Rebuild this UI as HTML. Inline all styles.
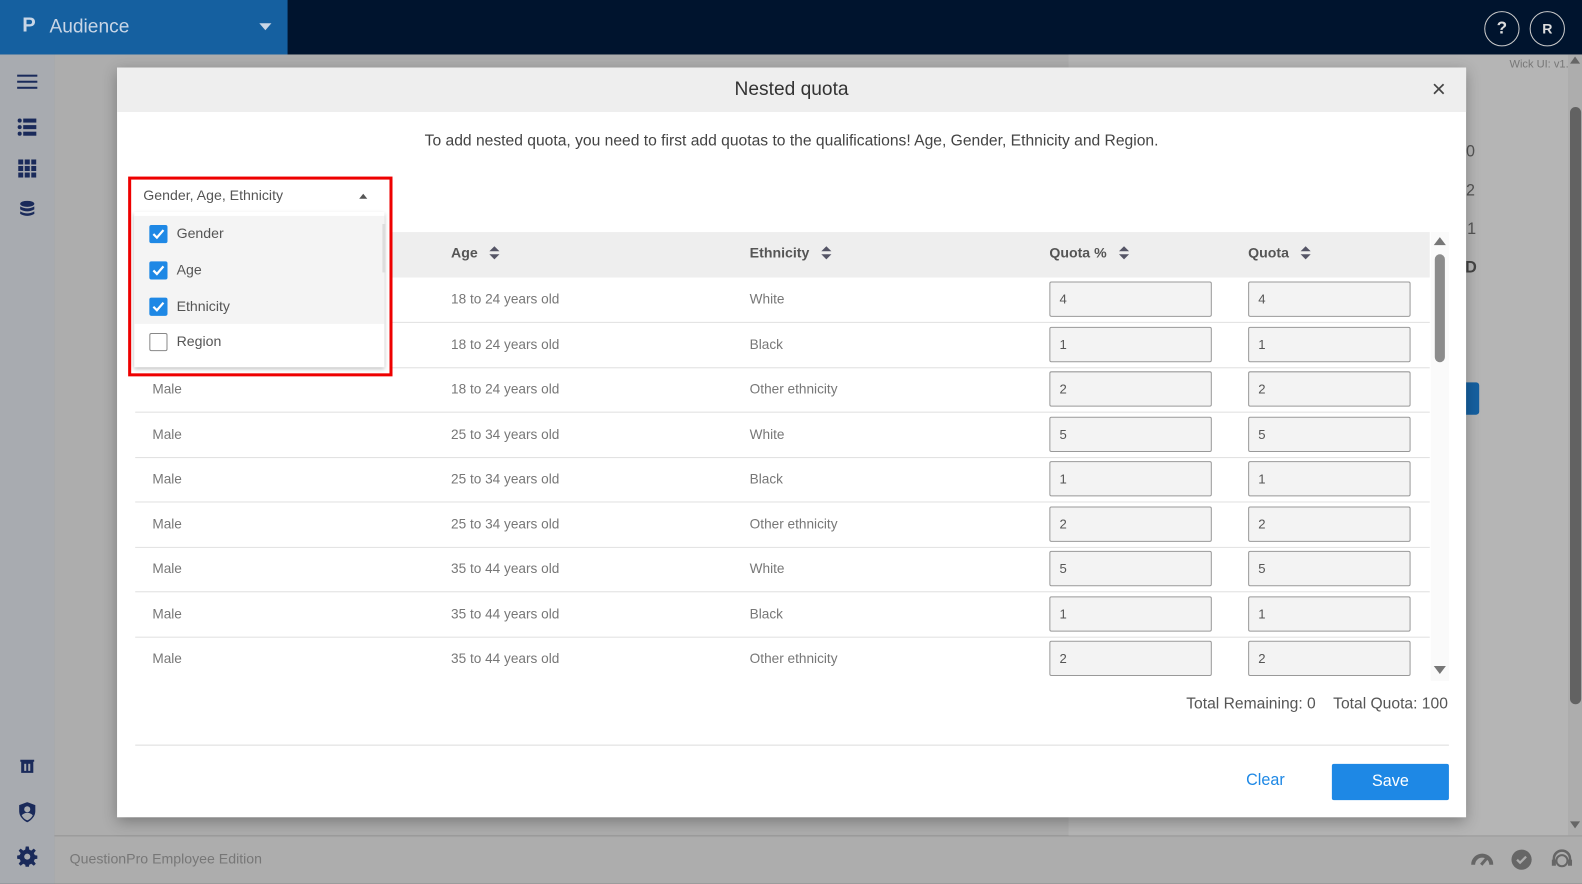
<!DOCTYPE html>
<html><head><style>
*{box-sizing:border-box;margin:0;padding:0}
body{width:1582px;height:884px;overflow:hidden;background:#222;font-family:"Liberation Sans",sans-serif;position:relative}
#w{position:absolute;left:0;top:0;width:1568px;height:876px;transform:scale(1.009);transform-origin:0 0}
.abs{position:absolute}
.top{left:0;top:0;width:1568px;height:54px;background:#00142e}
.brand{left:0;top:0;width:285px;height:54px;background:#1560a0;color:#c9d6e6;font-size:19px}
.side{left:0;top:54px;width:54px;height:822px;background:#a8abb0}
.main{left:54px;top:54px;width:1514px;height:774px;background:#adadad}
.foot{left:54px;top:828px;width:1514px;height:48px;background:#adadad;border-top:1px solid #999}
.modal{left:116px;top:67px;width:1337px;height:743px;background:#fff;box-shadow:0 4px 14px rgba(0,0,0,.3)}
.mh{left:0;top:0;width:1337px;height:44px;background:#eee;text-align:center;font-size:19px;line-height:44px;color:#333}
.cell{position:absolute;font-size:13.5px;color:#777}
.row{position:absolute;left:18px;width:1283px;height:45px;border-bottom:1px solid #e0e0e0}
.inp{position:absolute;width:161px;height:35px;border:1px solid #999;background:#f3f3f3;border-radius:2px;font-size:13px;color:#555;padding:9px 0 0 9px}
.th{position:absolute;top:12px;font-size:14px;font-weight:bold;color:#555}
.sort{display:inline-block;vertical-align:middle;margin-left:12px;width:10px;height:14px;position:relative}
.sort:before{content:"";position:absolute;left:0;top:0;border:5px solid transparent;border-bottom:5px solid #556;border-top:0}
.sort:after{content:"";position:absolute;left:0;top:8px;border:5px solid transparent;border-top:5px solid #556;border-bottom:0}
.cb{position:absolute;left:15px;width:18px;height:18px;border-radius:2px;background:#1e88e5}
.cb svg{position:absolute;left:2px;top:3px}
.opt{position:absolute;left:0;width:250px;height:36px;font-size:14px;color:#555}
.opt span{position:absolute;left:42px;top:9px}
</style></head><body><div id="w">
<div class="abs top"></div>
<div class="abs brand"><span class="abs" style="left:22px;top:14px;font-weight:bold;font-size:20px;color:#c9d6e6">P</span><span class="abs" style="left:49px;top:16px">Audience</span>
<span class="abs" style="left:257px;top:23px;border:6px solid transparent;border-top:7px solid #c9d6e6"></span></div>
<div class="abs" style="left:1471px;top:11px;width:35px;height:35px;border:1.5px solid #ccc;border-radius:50%;color:#ddd;font-weight:bold;text-align:center;line-height:32px;font-size:17px">?</div>
<div class="abs" style="left:1516px;top:11px;width:35px;height:35px;border:1.5px solid #ccc;border-radius:50%;color:#ddd;font-weight:bold;text-align:center;line-height:32px;font-size:14px">R</div>
<div class="abs side">
<div class="abs" style="left:17px;top:20px;width:20px;height:2px;background:#1a2a5a;box-shadow:0 6px 0 #1a2a5a,0 12px 0 #1a2a5a"></div>
<svg class="abs" style="left:17px;top:63px" width="20" height="18"><g fill="#1a2a5a"><circle cx="2.5" cy="2.5" r="2"/><circle cx="2.5" cy="9" r="2"/><circle cx="2.5" cy="15.5" r="2"/><rect x="6" y="0.5" width="13" height="4"/><rect x="6" y="7" width="13" height="4"/><rect x="6" y="13.5" width="13" height="4"/></g></svg>
<svg class="abs" style="left:18px;top:104px" width="18" height="18"><g fill="#1a2a5a"><rect x="0" y="0" width="5" height="5"/><rect x="6.5" y="0" width="5" height="5"/><rect x="13" y="0" width="5" height="5"/><rect x="0" y="6.5" width="5" height="5"/><rect x="6.5" y="6.5" width="5" height="5"/><rect x="13" y="6.5" width="5" height="5"/><rect x="0" y="13" width="5" height="5"/><rect x="6.5" y="13" width="5" height="5"/><rect x="13" y="13" width="5" height="5"/></g></svg>
<svg class="abs" style="left:19px;top:145px" width="16" height="16"><g fill="#1a2a5a"><ellipse cx="8" cy="3" rx="7" ry="3"/><path d="M1 5.5q7 4 14 0v3q-7 4-14 0z"/><path d="M1 10.5q7 4 14 0v2.5q-7 4-14 0z"/></g></svg>
<svg class="abs" style="left:20px;top:698px" width="14" height="15"><path d="M0 1h14v2h-1v11H1V3H0z" fill="#1a2a5a"/><rect x="4" y="5" width="2" height="7" fill="#a8abb0"/><rect x="8" y="5" width="2" height="7" fill="#a8abb0"/></svg>
<svg class="abs" style="left:18px;top:741px" width="18" height="20"><path d="M9 0l8 3v6c0 5-4 9-8 11C5 18 1 14 1 9V3z" fill="#1a2a5a"/><circle cx="9" cy="7" r="3" fill="#a8abb0"/><path d="M3.5 13q5.5-5 11 0q-2 4-5.5 5q-3.5-1-5.5-5z" fill="#a8abb0"/></svg>
<svg class="abs" style="left:17px;top:785px" width="20" height="20" viewBox="0 0 20 20"><path d="M8.5 0h3l.5 3 2 1 2.5-2 2 2-2 2.5 1 2 3 .5v3l-3 .5-1 2 2 2.5-2 2-2.5-2-2 1-.5 3h-3l-.5-3-2-1-2.5 2-2-2 2-2.5-1-2-3-.5v-3l3-.5 1-2-2-2.5 2-2 2.5 2 2-1z" fill="#1a2a5a"/><circle cx="10" cy="10" r="3" fill="#a8abb0"/></svg>
</div>
<div class="abs main">
<div class="abs" style="left:1005px;top:0;width:497px;height:774px;background:#b5b5b5"></div>
<div class="abs" style="left:1442px;top:4px;font-size:11px;color:#777">Wick UI: v1.1</div>
<div class="abs" style="left:1390px;top:88px;font-size:16px;color:#555">00</div>
<div class="abs" style="left:1390px;top:127px;font-size:16px;color:#555">32</div>
<div class="abs" style="left:1400px;top:165px;font-size:16px;color:#555">1</div>
<div class="abs" style="left:1398px;top:203px;font-size:16px;color:#444;font-weight:bold">D</div>
<div class="abs" style="left:1398px;top:325px;width:14px;height:32px;background:#1560a0;border-radius:0 3px 3px 0"></div>
<div class="abs" style="left:1500px;top:0;width:14px;height:774px;background:#adadad"></div>
<div class="abs" style="left:1502px;top:2px;border:5px solid transparent;border-bottom:7px solid #666;border-top:0"></div>
<div class="abs" style="left:1502px;top:52px;width:11px;height:592px;background:#626262;border-radius:6px"></div>
<div class="abs" style="left:1502px;top:760px;border:5px solid transparent;border-top:7px solid #666;border-bottom:0"></div>
</div>
<div class="abs foot"><span class="abs" style="left:15px;top:14px;font-size:14px;color:#777">QuestionPro Employee Edition</span>
<svg class="abs" style="left:1404px;top:14px" width="22" height="16"><path d="M2 14A9 9 0 0 1 20 14" stroke="#666" stroke-width="4" fill="none"/><path d="M10 14l6-7" stroke="#666" stroke-width="3"/></svg>
<svg class="abs" style="left:1443px;top:12px" width="22" height="22"><circle cx="11" cy="11" r="10" fill="#666"/><path d="M6.5 11l3 3 6-6" stroke="#adadad" stroke-width="2.2" fill="none"/></svg>
<svg class="abs" style="left:1483px;top:12px" width="22" height="22"><path d="M3 13V10a8 8 0 0 1 16 0v3" stroke="#666" stroke-width="2.5" fill="none"/><circle cx="11" cy="12" r="5.5" stroke="#666" stroke-width="2" fill="none"/><rect x="1" y="11" width="4" height="6" fill="#666"/><rect x="17" y="11" width="4" height="6" fill="#666"/></svg>
</div>
<div class="abs modal">
<div class="abs mh">Nested quota<span class="abs" style="right:20px;top:0;font-size:24px;color:#444">×</span></div>
<div class="abs" style="left:0;top:64px;width:1337px;text-align:center;font-size:15.5px;color:#444">To add nested quota, you need to first add quotas to the qualifications! Age, Gender, Ethnicity and Region.</div>
<div class="abs" style="left:18px;top:163px;width:1283px;height:45px;background:#eee">
<div class="th" style="left:313px">Age<span class="sort"></span></div>
<div class="th" style="left:609px">Ethnicity<span class="sort"></span></div>
<div class="th" style="left:906px">Quota %<span class="sort"></span></div>
<div class="th" style="left:1103px">Quota<span class="sort"></span></div>
</div>
<div class="abs" style="left:1302px;top:163px;width:18px;height:445px;background:#fafafa">
<div class="abs" style="left:3px;top:5px;border:6px solid transparent;border-bottom:8px solid #777;border-top:0"></div>
<div class="abs" style="left:4px;top:22px;width:10px;height:107px;background:#8c8c8c;border-radius:5px"></div>
<div class="abs" style="left:3px;top:430px;border:6px solid transparent;border-top:8px solid #777;border-bottom:0"></div>
</div>
<div class="row" style="top:208px"><span class="cell" style="left:313px;top:14px">18 to 24 years old</span><span class="cell" style="left:609px;top:14px">White</span><div class="inp" style="left:906px;top:4px">4</div><div class="inp" style="left:1103px;top:4px">4</div></div>
<div class="row" style="top:253px"><span class="cell" style="left:313px;top:14px">18 to 24 years old</span><span class="cell" style="left:609px;top:14px">Black</span><div class="inp" style="left:906px;top:4px">1</div><div class="inp" style="left:1103px;top:4px">1</div></div>
<div class="row" style="top:297px"><span class="cell" style="left:17px;top:14px">Male</span><span class="cell" style="left:313px;top:14px">18 to 24 years old</span><span class="cell" style="left:609px;top:14px">Other ethnicity</span><div class="inp" style="left:906px;top:4px">2</div><div class="inp" style="left:1103px;top:4px">2</div></div>
<div class="row" style="top:342px"><span class="cell" style="left:17px;top:14px">Male</span><span class="cell" style="left:313px;top:14px">25 to 34 years old</span><span class="cell" style="left:609px;top:14px">White</span><div class="inp" style="left:906px;top:4px">5</div><div class="inp" style="left:1103px;top:4px">5</div></div>
<div class="row" style="top:386px"><span class="cell" style="left:17px;top:14px">Male</span><span class="cell" style="left:313px;top:14px">25 to 34 years old</span><span class="cell" style="left:609px;top:14px">Black</span><div class="inp" style="left:906px;top:4px">1</div><div class="inp" style="left:1103px;top:4px">1</div></div>
<div class="row" style="top:431px"><span class="cell" style="left:17px;top:14px">Male</span><span class="cell" style="left:313px;top:14px">25 to 34 years old</span><span class="cell" style="left:609px;top:14px">Other ethnicity</span><div class="inp" style="left:906px;top:4px">2</div><div class="inp" style="left:1103px;top:4px">2</div></div>
<div class="row" style="top:475px"><span class="cell" style="left:17px;top:14px">Male</span><span class="cell" style="left:313px;top:14px">35 to 44 years old</span><span class="cell" style="left:609px;top:14px">White</span><div class="inp" style="left:906px;top:4px">5</div><div class="inp" style="left:1103px;top:4px">5</div></div>
<div class="row" style="top:520px"><span class="cell" style="left:17px;top:14px">Male</span><span class="cell" style="left:313px;top:14px">35 to 44 years old</span><span class="cell" style="left:609px;top:14px">Black</span><div class="inp" style="left:906px;top:4px">1</div><div class="inp" style="left:1103px;top:4px">1</div></div>
<div class="row" style="top:564px;border:0"><span class="cell" style="left:17px;top:14px">Male</span><span class="cell" style="left:313px;top:14px">35 to 44 years old</span><span class="cell" style="left:609px;top:14px">Other ethnicity</span><div class="inp" style="left:906px;top:4px">2</div><div class="inp" style="left:1103px;top:4px">2</div></div>
<div class="abs" style="right:18px;top:622px;font-size:15.5px;color:#555">Total Remaining: 0&nbsp;&nbsp;&nbsp;&nbsp;Total Quota: 100</div>
<div class="abs" style="left:18px;top:671px;width:1302px;height:1px;background:#ddd"></div>
<div class="abs" style="left:1119px;top:698px;font-size:16px;color:#1e88e5">Clear</div>
<div class="abs" style="left:1204px;top:690px;width:116px;height:36px;background:#1e88e5;border-radius:2px;color:#fff;font-size:16px;text-align:center;line-height:36px">Save</div>
<div class="abs" style="left:11px;top:108px;width:262px;height:198px;border:3px solid #e00;background:#fff">
<div class="abs" style="left:12px;top:7px;font-size:14px;color:#555">Gender, Age, Ethnicity</div>
<div class="abs" style="left:226px;top:14px;border:4px solid transparent;border-bottom:5px solid #555;border-top:0"></div>
<div class="abs" style="left:3px;top:32px;width:248px;height:154px;background:#fff;box-shadow:0 2px 4px rgba(0,0,0,.25)">
<div class="abs" style="left:0;top:4px;width:248px;height:107px;background:#f4f4f4"></div>
<div class="abs" style="left:246px;top:12px;width:3px;height:48px;background:#ddd"></div>
<div class="opt" style="top:4px"><div class="cb" style="top:9px"><svg width="14" height="12"><path d="M2 6l3.5 3.5L12 2" stroke="#fff" stroke-width="2.2" fill="none"/></svg></div><span>Gender</span></div>
<div class="opt" style="top:40px"><div class="cb" style="top:9px"><svg width="14" height="12"><path d="M2 6l3.5 3.5L12 2" stroke="#fff" stroke-width="2.2" fill="none"/></svg></div><span>Age</span></div>
<div class="opt" style="top:76px"><div class="cb" style="top:9px"><svg width="14" height="12"><path d="M2 6l3.5 3.5L12 2" stroke="#fff" stroke-width="2.2" fill="none"/></svg></div><span>Ethnicity</span></div>
<div class="opt" style="top:111px"><div class="cb" style="top:9px;background:#fff;border:1px solid #888"></div><span>Region</span></div>
</div>
</div>
</div>
</div></body></html>
